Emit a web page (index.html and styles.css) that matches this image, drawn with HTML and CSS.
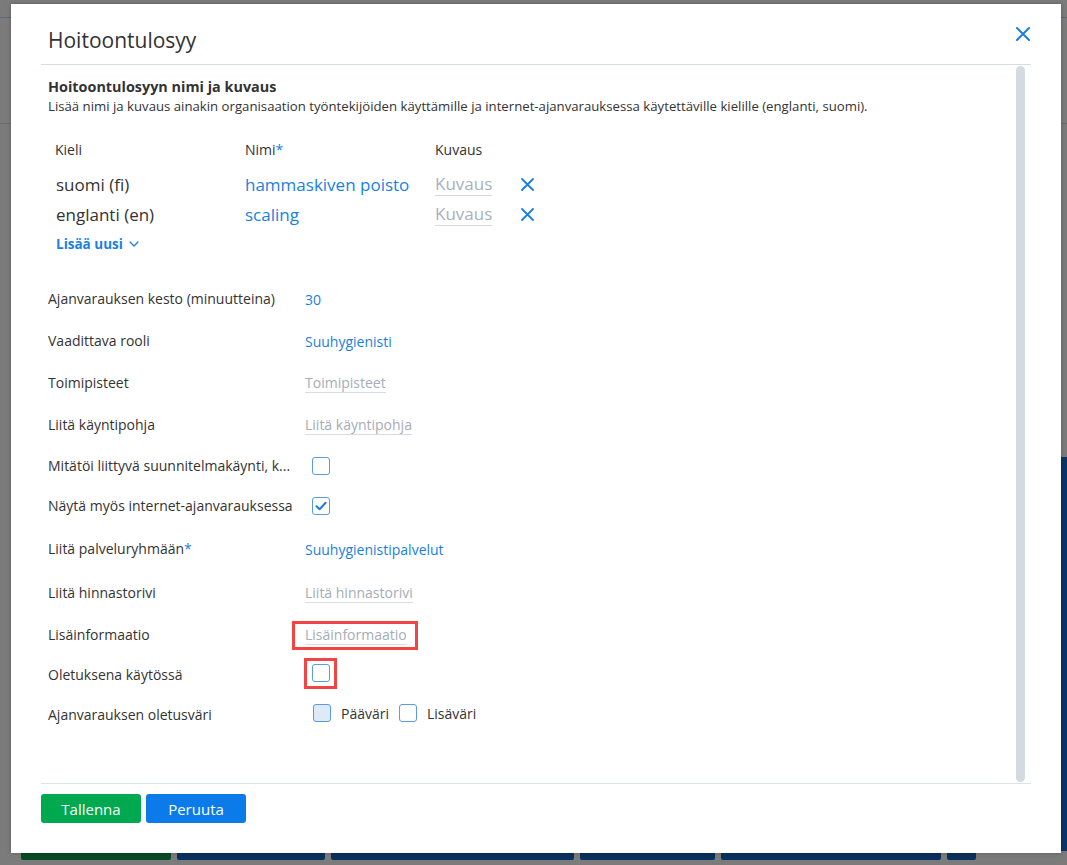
FILE: index.html
```html
<!DOCTYPE html>
<html lang="fi">
<head>
<meta charset="utf-8">
<title>Hoitoontulosyy</title>
<link rel="stylesheet" href="styles.css">
</head>
<body>
<div class="app">
  <div class="app-top"></div>
  <div class="app-main">
    <div class="app-rule"></div>
    <div class="app-side-wrap"><div class="app-side"></div></div>
  </div>
  <div class="app-footer">
    <span class="bg-btn bg-green w1"></span>
    <span class="bg-btn w2"></span>
    <span class="bg-btn w3"></span>
    <span class="bg-btn w4"></span>
    <span class="bg-btn w5"></span>
    <span class="bg-btn w6"></span>
  </div>
</div>

<div class="modal">
  <div class="modal-header">
    <h1 class="modal-title">Hoitoontulosyy</h1>
    <svg class="close" width="14" height="14" viewBox="0 0 14 14"><path d="M1 1L13 13M13 1L1 13" stroke="#1a7fe3" stroke-width="2" stroke-linecap="round"/></svg>
  </div>
  <div class="modal-body">
    <div class="content">
      <div class="section-title">Hoitoontulosyyn nimi ja kuvaus</div>
      <div class="section-desc">Lisää nimi ja kuvaus ainakin organisaation työntekijöiden käyttämille ja internet-ajanvarauksessa käytettäville kielille (englanti, suomi).</div>

      <div class="lang-table">
        <div class="th">Kieli</div>
        <div class="th">Nimi<span class="req">*</span></div>
        <div class="th">Kuvaus</div>
        <div class="th"></div>

        <div class="td">suomi (fi)</div>
        <div class="td val">hammaskiven poisto</div>
        <div class="td"><span class="ph-big">Kuvaus</span></div>
        <div class="td"><svg class="rm" width="13" height="13" viewBox="0 0 13 13"><path d="M1 1L12 12M12 1L1 12" stroke="#1a7fe3" stroke-width="1.8" stroke-linecap="round"/></svg></div>

        <div class="td">englanti (en)</div>
        <div class="td val">scaling</div>
        <div class="td"><span class="ph-big">Kuvaus</span></div>
        <div class="td"><svg class="rm" width="13" height="13" viewBox="0 0 13 13"><path d="M1 1L12 12M12 1L1 12" stroke="#1a7fe3" stroke-width="1.8" stroke-linecap="round"/></svg></div>
      </div>
      <div class="add-new">Lisää uusi <svg width="10" height="6" viewBox="0 0 10 6"><path d="M1 1L5 5L9 1" stroke="#1a7fe3" stroke-width="1.3" fill="none" stroke-linecap="round" stroke-linejoin="round"/></svg></div>

      <div class="form">
        <div class="label">Ajanvarauksen kesto (minuutteina)</div>
        <div class="value"><span class="val">30</span></div>

        <div class="label">Vaadittava rooli</div>
        <div class="value"><span class="val">Suuhygienisti</span></div>

        <div class="label">Toimipisteet</div>
        <div class="value"><span class="ph">Toimipisteet</span></div>

        <div class="label">Liitä käyntipohja</div>
        <div class="value"><span class="ph">Liitä käyntipohja</span></div>

        <div class="label cbrow">Mitätöi liittyvä suunnitelmakäynti, k...</div>
        <div class="value cbrow"><span class="cb cb-in"></span></div>

        <div class="label cbrow">Näytä myös internet-ajanvarauksessa</div>
        <div class="value cbrow"><span class="cb cb-in"><svg width="14" height="14" viewBox="0 0 14 14"><path d="M2.5 7.2L5.6 10.2L11.6 3.8" stroke="#1a7fe3" stroke-width="2" fill="none" stroke-linecap="round" stroke-linejoin="round"/></svg></span></div>

        <div class="label tall">Liitä palveluryhmään<span class="req">*</span></div>
        <div class="value tall"><span class="val">Suuhygienistipalvelut</span></div>

        <div class="label">Liitä hinnastorivi</div>
        <div class="value"><span class="ph">Liitä hinnastorivi</span></div>

        <div class="label">Lisäinformaatio</div>
        <div class="value"><span class="hl-field"><span class="ph">Lisäinformaatio</span></span></div>

        <div class="label short">Oletuksena käytössä</div>
        <div class="value short"><span class="hl-cb"><span class="cb"></span></span></div>

        <div class="label">Ajanvarauksen oletusväri</div>
        <div class="value">
          <div class="colors">
            <span class="cb cb-fill"></span><span class="color-text">Pääväri</span>
            <span class="cb"></span><span class="color-text">Lisäväri</span>
          </div>
        </div>
      </div>
    </div>
    <div class="scrollbar"></div>
  </div>
  <div class="modal-footer">
    <button class="btn btn-save">Tallenna</button>
    <button class="btn btn-cancel">Peruuta</button>
  </div>
</div>
</body>
</html>
```

FILE: styles.css
```css
html, body {
  margin: 0;
  padding: 0;
}
body {
  font-family: "Open Sans", "Noto Sans", sans-serif;
  color: #333;
  width: 1067px;
  height: 865px;
  overflow: hidden;
}

/* dimmed background app */
.app {
  height: 865px;
  background: #7b7b7b;
  display: flex;
  flex-direction: column;
}
.app-top {
  height: 17px;
  border-bottom: 1px solid #5d6a7c;
  flex: none;
}
.app-main {
  flex: 1;
  display: flex;
  flex-direction: column;
}
.app-rule {
  margin-top: 105px;
  height: 1px;
  background: #6c6c6c;
}
.app-side-wrap {
  flex: 1;
  display: flex;
  justify-content: flex-end;
  padding-top: 333px;
  padding-bottom: 2px;
}
.app-side {
  width: 6px;
  background: #0b3567;
}
.app-footer {
  height: 12px;
  flex: none;
  display: flex;
  gap: 6px;
  padding-left: 21px;
}
.bg-btn {
  height: 7px;
  background: #0a305c;
  border-radius: 0 0 2px 2px;
}
.bg-green { background: #0b4a27; }
.w1 { width: 150px; }
.w2 { width: 148px; }
.w3 { width: 243px; }
.w4 { width: 135px; }
.w5 { width: 220px; }
.w6 { width: 29px; }

/* modal */
.modal {
  position: absolute;
  left: 11px;
  top: 4px;
  width: 1050px;
  height: 849px;
  background: #fff;
  box-sizing: border-box;
  padding: 0 30px;
  display: flex;
  flex-direction: column;
  box-shadow: 0 0 4px rgba(0, 0, 0, 0.25);
}
.modal-header {
  height: 61px;
  box-sizing: border-box;
  border-bottom: 1px solid #d3dce7;
  display: flex;
  justify-content: space-between;
  align-items: flex-start;
  padding: 0 1px 0 7px;
  flex: none;
}
.modal-title {
  margin: 22px 0 0 0;
  font-size: 21px;
  font-weight: 400;
  line-height: 28px;
  color: #333;
}
.close {
  margin-top: 23px;
}

.modal-body {
  flex: 1;
  display: flex;
  min-height: 0;
}
.content {
  flex: 1;
  padding: 12px 0 0 7px;
}
.scrollbar {
  width: 9px;
  background: #d3dae2;
  border-radius: 5px;
  margin: 1px 6px 1px 0;
}

.section-title {
  font-size: 14.4px;
  font-weight: 700;
  line-height: 20px;
}
.section-desc {
  font-size: 13.2px;
  line-height: 18px;
}

.lang-table {
  margin-top: 24px;
  display: grid;
  grid-template-columns: 190px 190px 86px 30px;
  grid-template-rows: 22px 38px 30px;
  align-items: center;
}
.th {
  font-size: 14px;
  line-height: 22px;
  padding-left: 7px;
}
.td {
  font-size: 17px;
  height: 30px;
  padding-left: 7px;
  display: flex;
  align-items: center;
  align-self: end;
}
.lang-table .td:nth-child(4n+1) {
  padding-left: 8px;
}
.ph-big {
  color: #a9b1bc;
  line-height: 22px;
  border-bottom: 1px solid #d3d9e2;
}
.rm { display: block; }
.req { color: #1a7fe3; }
.val { color: #1a7fe3; }

.add-new {
  font-size: 13.5px;
  font-weight: 700;
  color: #1a7fe3;
  line-height: 22px;
  padding-left: 8px;
  margin-top: 4px;
  display: flex;
  align-items: center;
  gap: 6px;
}

.form {
  margin-top: 23px;
  display: grid;
  grid-template-columns: 250px 1fr;
  column-gap: 7px;
  font-size: 14px;
}
.label, .value {
  height: 42px;
  display: flex;
  align-items: center;
  min-width: 0;
}
.label {
  white-space: nowrap;
  overflow: hidden;
  text-overflow: ellipsis;
  display: block;
  line-height: 42px;
}
.label.cbrow { line-height: 40px; }
.label.tall { line-height: 46px; }
.label.short { line-height: 38px; }
.cbrow { height: 40px; }
.tall { height: 46px; }
.short { height: 38px; }

.ph {
  color: #a5adb8;
  line-height: 19px;
  border-bottom: 1px solid #d6dce4;
}

.cb {
  width: 18px;
  height: 18px;
  box-sizing: border-box;
  border: 1.5px solid #5a9be3;
  border-radius: 3px;
  background: #fff;
  display: inline-flex;
  align-items: center;
  justify-content: center;
  flex: none;
}
.cb-in { margin-left: 7px; }
.cb-fill { background: #dcebf6; }

.hl-field {
  display: inline-flex;
  border: 3px solid #f24444;
  padding: 1px 8px 2px 10px;
  margin-left: -13px;
}
.hl-cb {
  display: inline-flex;
  border: 3px solid #f24444;
  padding: 3px 4px 4px 5px;
  margin-left: -1px;
  margin-top: -4px;
}

.colors {
  display: flex;
  align-items: center;
  margin-left: 8px;
  margin-top: -4px;
}
.color-text {
  margin-left: 10px;
  margin-right: 10px;
  font-size: 14px;
}

.modal-footer {
  height: 70px;
  box-sizing: border-box;
  border-top: 1px solid #dde2e8;
  padding-top: 10px;
  display: flex;
  gap: 5px;
  align-items: flex-start;
  flex: none;
}
.btn {
  width: 100px;
  height: 29px;
  border: none;
  border-radius: 3px;
  color: #fff;
  font-family: "Open Sans", "Noto Sans", sans-serif;
  font-size: 15px;
  padding: 0;
}
.btn-save { background: #00a94f; }
.btn-cancel { background: #0b7be9; }
```
